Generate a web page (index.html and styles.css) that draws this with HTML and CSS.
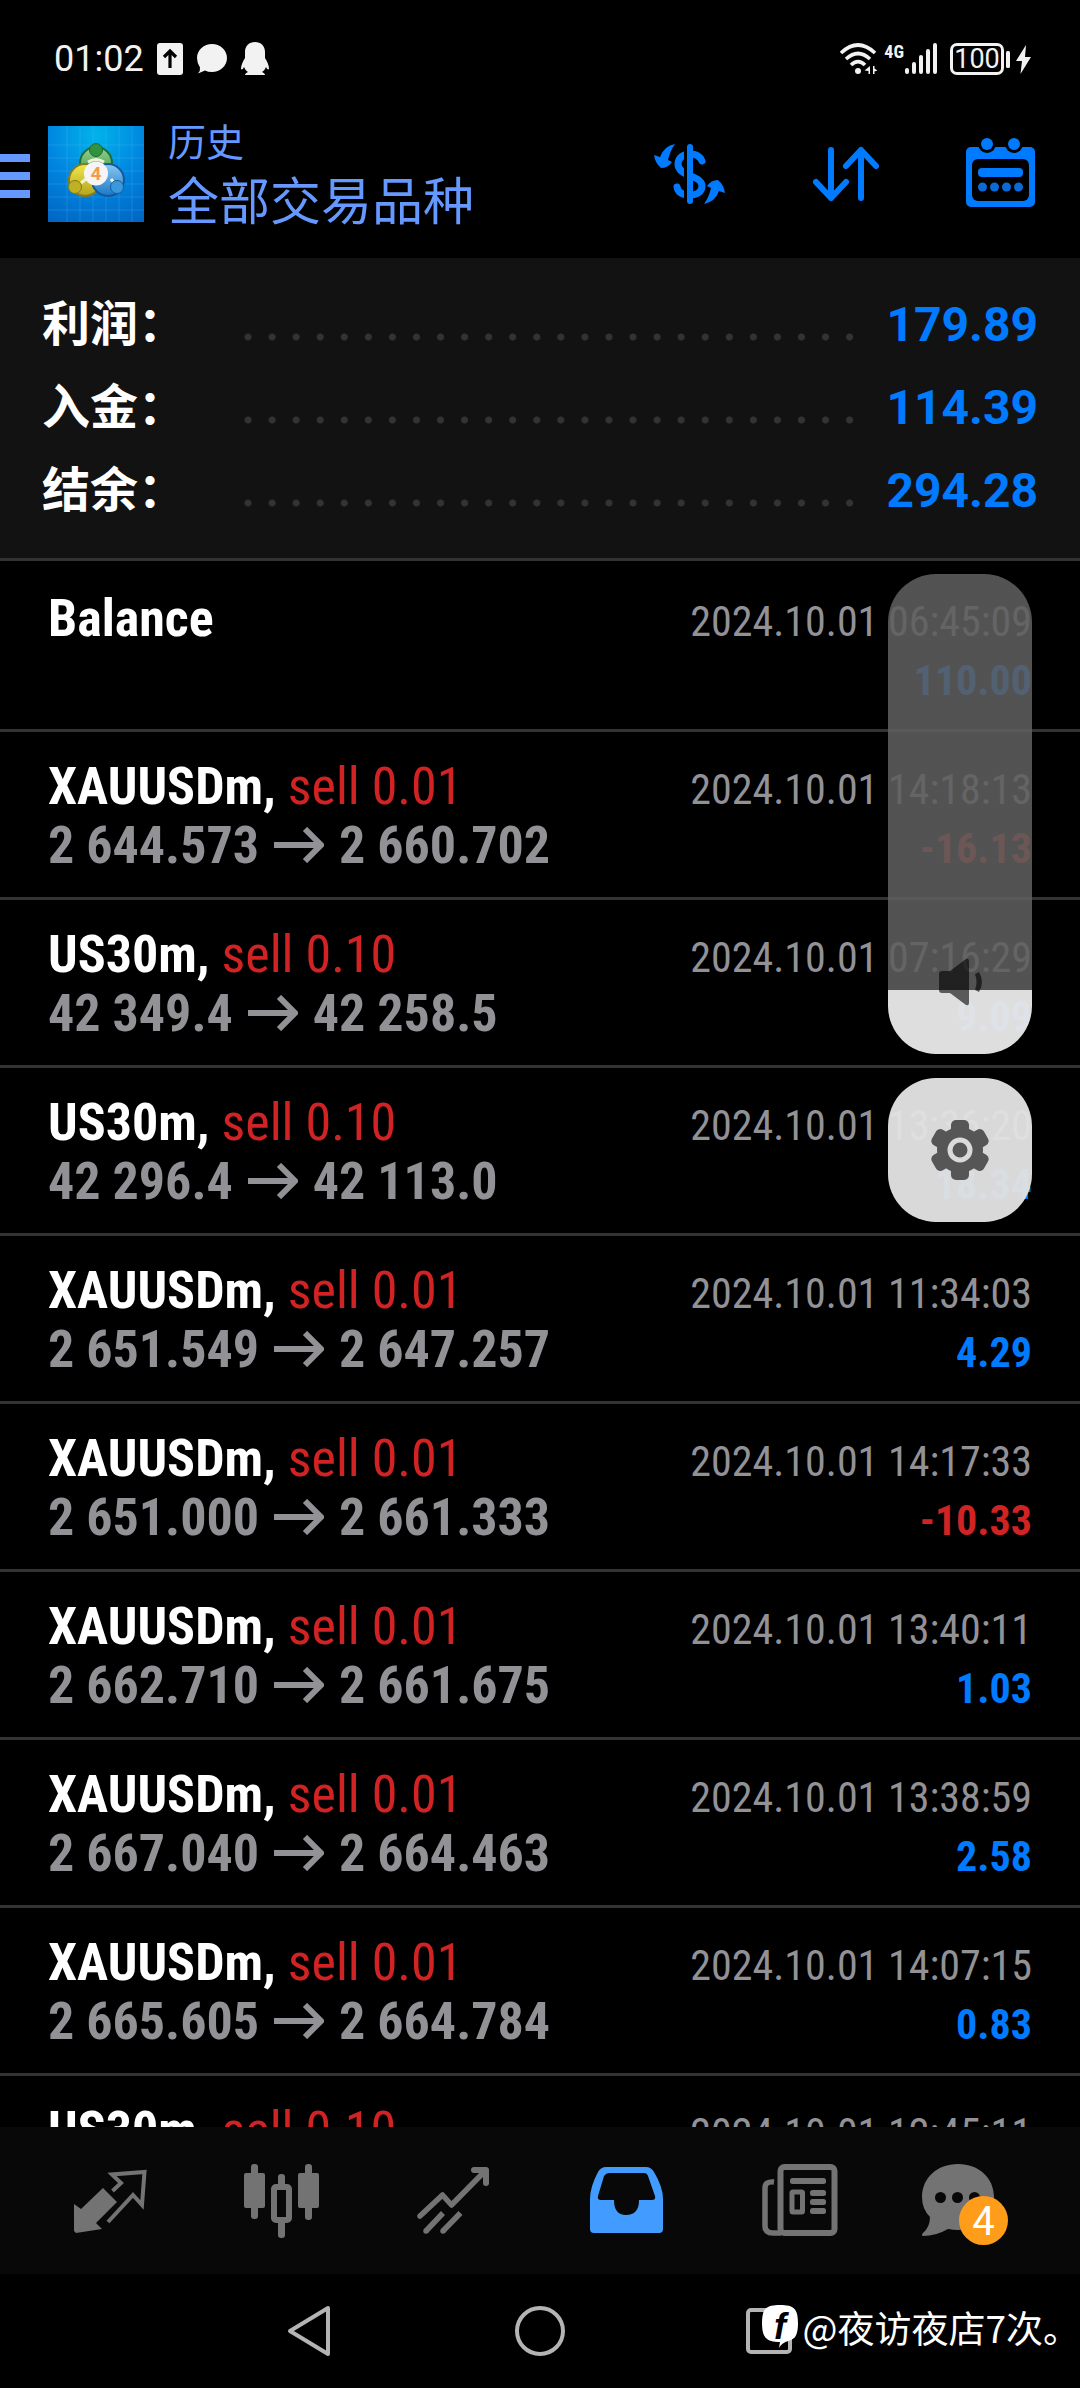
FILE: index.html
```html
<!DOCTYPE html>
<html lang="zh-CN">
<head>
<meta charset="utf-8">
<meta name="viewport" content="width=device-width, initial-scale=1">
<title>历史</title>
<link rel="stylesheet" href="styles.css">
</head>
<body>
<div class="app">
  <div class="status">
    <span class="status-time">01:02</span>
    <svg class="status-icon" width="26" height="32" viewBox="0 0 26 32"><rect width="26" height="32" rx="3" fill="#f2f2f2"/><path d="M13 25V10M7 14l6-6 6 6" fill="none" stroke="#000" stroke-width="3.2"/></svg>
    <svg class="status-icon" width="32" height="32" viewBox="0 0 32 32"><path d="M16 1C24 1 31 7 31 15s-7 14-15 14q-4 0-7-1.500l-7 3q2.500-3 2-6Q1 20 1 15C1 7 8 1 16 1z" fill="#f2f2f2"/></svg>
    <svg class="status-icon" width="28" height="34" viewBox="0 0 28 34"><path d="M14 0c6 0 10 4 10 10v6c2 3 4 7 4 11-1 1-2 0-3-2-1 2-2 4-4 5 2 1 3 2 3 3H4c0-1 1-2 3-3-2-1-3-3-4-5-1 2-2 3-3 2 0-4 2-8 4-11v-6C4 4 8 0 14 0z" fill="#f2f2f2"/></svg>
    <span class="status-gap"></span>
    <svg width="38" height="32" viewBox="0 0 38 32" fill="none" stroke="#f2f2f2" stroke-width="3.600"><path d="M1 10Q18 -6 35 10M6 16Q18 5 30 16M11 22Q18 15 25 22"/><circle cx="18" cy="28" r="3" fill="#f2f2f2" stroke="none"/><path d="M30 23v8h-1.500v-3l-4-.500zM33 31v-8h1.500v2.500l3 2-3 1v2.500z" fill="#f2f2f2" stroke="none"/></svg>
    <span class="status-net">4G</span>
    <svg width="34" height="32" viewBox="0 0 34 32" stroke="#f2f2f2" stroke-width="4" stroke-linecap="round"><path d="M3 27v2M10 21v8M17 14v15M24 8v21M31 2v27"/></svg>
    <span class="battery">100</span>
    <svg width="26" height="32" viewBox="0 0 26 32" fill="#f2f2f2"><rect y="8" width="4" height="17" rx="1.500"/><path d="M20 2L10 18h6l-1.500 13L25 14h-6z"/></svg>
  </div>

  <header class="header">
    <button class="menu" aria-label="菜单"><svg width="30" height="48" viewBox="0 0 30 48" fill="#6699ff"><path d="M0 4h30v8H0zM0 22h30v8H0zM0 40h30v8H0z"/></svg></button>
    <svg class="logo" viewBox="0 0 96 96">
      <defs>
        <radialGradient id="sky" cx=".5" cy=".1" r="1"><stop offset="0" stop-color="#00b4ea"/><stop offset=".5" stop-color="#0086e0"/><stop offset="1" stop-color="#0066c4"/></radialGradient>
        <linearGradient id="green" x2="0" y2="1"><stop offset="0" stop-color="#9bd095"/><stop offset="1" stop-color="#2f9236"/></linearGradient>
        <linearGradient id="yellow" x2="0" y2="1"><stop offset="0" stop-color="#f0e64c"/><stop offset="1" stop-color="#b5a41d"/></linearGradient>
        <linearGradient id="blue" x2="0" y2="1"><stop offset="0" stop-color="#8ac8f0"/><stop offset="1" stop-color="#1b78c8"/></linearGradient>
      </defs>
      <rect width="96" height="96" fill="url(#sky)"/>
      <path d="M19 0v96M32 0v96M45 0v96M58 0v96M71 0v96M84 0v96M0 19h96M0 32h96M0 45h96M0 58h96M0 71h96M0 84h96" stroke="#6cc4f4" stroke-opacity=".22"/>
      <circle cx="48" cy="37" r="16" fill="url(#green)" stroke="#1c7036" stroke-width="2"/>
      <circle cx="37" cy="54" r="16" fill="url(#yellow)" stroke="#837c20" stroke-width="2"/>
      <circle cx="60" cy="54" r="16" fill="url(#blue)" stroke="#125a9c" stroke-width="2"/>
      <path d="M40 36q8-5 16 0M33 57l5-4M63 53l4 5" fill="none" stroke="#e9f3d8" stroke-width="3"/>
      <circle cx="48" cy="24" r="6.500" fill="#2f9340" stroke="#1c6a30"/>
      <circle cx="27" cy="61" r="6.500" fill="#c0b024" stroke="#857a18"/>
      <circle cx="69" cy="61" r="6.500" fill="#3c98dc" stroke="#155c9e"/>
      <circle cx="48" cy="47.500" r="12" fill="#f6f4f4"/>
      <text x="48" y="54" text-anchor="middle" font-family="Roboto, sans-serif" font-size="19" font-weight="700" fill="#f59a4c">4</text>
    </svg>
    <h1 class="titles"><span class="title-small">历史</span><span class="title-big">全部交易品种</span></h1>
    <button class="tool" aria-label="货币"><svg class="icon" viewBox="0 0 96 96"><path d="M60 35C58 30 54 28 48 28C41 28 36 32 36 38C36 44 41 47 48 50C55 52 60 55 60 60C60 66 55 69 48 69C41 69 36 67 35 61" fill="none" stroke="#007aff" stroke-width="7" stroke-linecap="round"/><path d="M43.500 18v60" stroke="#000" stroke-width="3"/><path d="M48 21v54" stroke="#007aff" stroke-width="6" stroke-linecap="round"/><path d="M33 18Q28 25 26 34L30 36Q26 42 19 42Q13 37 12 29L18 31Q22 20 33 18z" fill="#007aff"/><path transform="rotate(180 47.500 48)" d="M33 18Q28 25 26 34L30 36Q26 42 19 42Q13 37 12 29L18 31Q22 20 33 18z" fill="#007aff"/></svg></button>
    <button class="tool" aria-label="排序"><svg class="icon" viewBox="0 0 96 96" fill="none" stroke="#007aff" stroke-width="6" stroke-linecap="round" stroke-linejoin="round"><path d="M33 24v48M18 56l15 16 15-16M63 72V24M48 40l15-16 15 16"/></svg></button>
    <button class="tool" aria-label="日历"><svg class="icon" viewBox="0 0 96 96" fill="#007aff"><rect x="12" y="21" width="69" height="60" rx="5"/><circle cx="33" cy="18" r="9" fill="#000"/><circle cx="60" cy="18" r="9" fill="#000"/><rect x="18" y="33" width="57" height="42" rx="6" fill="#000"/><circle cx="33" cy="18" r="6"/><circle cx="60" cy="18" r="6"/><rect x="24" y="42" width="45" height="9" rx="4"/><g fill="#0a6ad8"><circle cx="28.500" cy="61" r="4.500"/><circle cx="40.500" cy="61" r="4.500"/><circle cx="52.500" cy="61" r="4.500"/><circle cx="64.500" cy="61" r="4.500"/></g></svg></button>
  </header>

  <dl class="summary">
    <div class="sum-row"><dt>利润：</dt><dd>179.89</dd></div>
    <div class="sum-row"><dt>入金：</dt><dd>114.39</dd></div>
    <div class="sum-row"><dt>结余：</dt><dd>294.28</dd></div>
  </dl>

  <svg class="defs" aria-hidden="true"><symbol id="arrow" viewBox="0 0 50 36"><path d="M0 18h46M31 2l16 16-16 16" fill="none" stroke="#929296" stroke-width="6"/></symbol></svg>

  <ul class="deals">
    <li class="deal"><div class="line"><b class="symbol">Balance</b><time>2024.10.01 06:45:09</time></div><div class="line"><b class="profit">110.00</b></div></li>
    <li class="deal"><div class="line"><b class="symbol">XAUUSDm,</b><span class="side">sell 0.01</span><time>2024.10.01 14:18:13</time></div><div class="line"><b class="price">2 644.573</b><svg class="to"><use href="#arrow"/></svg><b class="price">2 660.702</b><b class="profit loss">-16.13</b></div></li>
    <li class="deal"><div class="line"><b class="symbol">US30m,</b><span class="side">sell 0.10</span><time>2024.10.01 07:16:29</time></div><div class="line"><b class="price">42 349.4</b><svg class="to"><use href="#arrow"/></svg><b class="price">42 258.5</b><b class="profit">9.09</b></div></li>
    <li class="deal"><div class="line"><b class="symbol">US30m,</b><span class="side">sell 0.10</span><time>2024.10.01 13:36:20</time></div><div class="line"><b class="price">42 296.4</b><svg class="to"><use href="#arrow"/></svg><b class="price">42 113.0</b><b class="profit">18.34</b></div></li>
    <li class="deal"><div class="line"><b class="symbol">XAUUSDm,</b><span class="side">sell 0.01</span><time>2024.10.01 11:34:03</time></div><div class="line"><b class="price">2 651.549</b><svg class="to"><use href="#arrow"/></svg><b class="price">2 647.257</b><b class="profit">4.29</b></div></li>
    <li class="deal"><div class="line"><b class="symbol">XAUUSDm,</b><span class="side">sell 0.01</span><time>2024.10.01 14:17:33</time></div><div class="line"><b class="price">2 651.000</b><svg class="to"><use href="#arrow"/></svg><b class="price">2 661.333</b><b class="profit loss">-10.33</b></div></li>
    <li class="deal"><div class="line"><b class="symbol">XAUUSDm,</b><span class="side">sell 0.01</span><time>2024.10.01 13:40:11</time></div><div class="line"><b class="price">2 662.710</b><svg class="to"><use href="#arrow"/></svg><b class="price">2 661.675</b><b class="profit">1.03</b></div></li>
    <li class="deal"><div class="line"><b class="symbol">XAUUSDm,</b><span class="side">sell 0.01</span><time>2024.10.01 13:38:59</time></div><div class="line"><b class="price">2 667.040</b><svg class="to"><use href="#arrow"/></svg><b class="price">2 664.463</b><b class="profit">2.58</b></div></li>
    <li class="deal"><div class="line"><b class="symbol">XAUUSDm,</b><span class="side">sell 0.01</span><time>2024.10.01 14:07:15</time></div><div class="line"><b class="price">2 665.605</b><svg class="to"><use href="#arrow"/></svg><b class="price">2 664.784</b><b class="profit">0.83</b></div></li>
    <li class="deal"><div class="line"><b class="symbol">US30m,</b><span class="side">sell 0.10</span><time>2024.10.01 12:45:11</time></div></li>
  </ul>

  <nav class="tabs">
    <button class="tab" aria-label="行情"><svg class="icon" viewBox="0 0 96 96"><path d="M12 51l7 5 22-21 14 14-21 21 6 6-26 4-2-2z" fill="#737373"/><path d="M50.500 38l8.500-8-9-8.500 32.500-2.500-2.500 33-9-10-25 27" fill="none" stroke="#737373" stroke-width="4"/></svg></button>
    <button class="tab" aria-label="图表"><svg class="icon" viewBox="0 0 96 96" fill="#737373"><rect x="10" y="20" width="21" height="35" rx="2"/><rect x="17" y="11" width="7" height="55" rx="3"/><rect x="64" y="20" width="21" height="35" rx="2"/><rect x="71" y="11" width="7" height="56" rx="3"/><rect x="44" y="21" width="7" height="14" rx="3"/><rect x="44" y="66" width="7" height="19" rx="3"/><rect x="40" y="34" width="15" height="33" rx="2" fill="none" stroke="#737373" stroke-width="6"/></svg></button>
    <button class="tab" aria-label="交易"><svg class="icon" viewBox="0 0 96 96" fill="none" stroke="#737373" stroke-width="5.500" stroke-linejoin="round"><path d="M14 63l22.500-21 9 10L79 18" stroke-linecap="round"/><path d="M68 17h12v13" stroke-width="6" stroke-linecap="round"/><path d="M20 78l17-18M37 78l17.500-18"/><path d="M20 78h.010M37 78h.010" stroke-linecap="round"/></svg></button>
    <button class="tab" aria-label="历史" aria-current="page"><svg class="icon" viewBox="0 0 96 96"><path fill-rule="evenodd" d="M28 14H68Q73 14 76 19Q85 34 85 46V76Q85 80 81 80H16Q12 80 12 76V46Q12 34 20 19Q23 14 28 14zM31 20Q28 20 26 23L20 43Q19 47 23 47H36Q36 62 48 62Q61 62 61 47H74Q78 47 77 43L70 23Q69 20 66 20z" fill="#429cff"/></svg></button>
    <button class="tab" aria-label="新闻"><svg class="icon" viewBox="0 0 96 96" fill="#737373"><rect x="30.500" y="14" width="54" height="66" rx="4" fill="none" stroke="#737373" stroke-width="6"/><path d="M24 29Q15 28 15 35V73Q15 80 23 80H31" fill="none" stroke="#737373" stroke-width="5.500"/><rect x="40" y="25" width="36" height="6" rx="2.500"/><rect x="42" y="39" width="10.500" height="20" rx="1" fill="none" stroke="#737373" stroke-width="5"/><rect x="60" y="37" width="16" height="6" rx="2.500"/><rect x="60" y="46" width="16" height="6" rx="2.500"/><rect x="60" y="55" width="16" height="6" rx="2.500"/></svg></button>
    <button class="tab" aria-label="消息"><svg class="icon" viewBox="0 0 96 96"><path d="M36 11C57 11 72 25 72 44S57 77 36 77Q32 77 26 76Q14 83 1 83Q-1 82 1 80Q8 74 8 64Q0 56 0 44C0 25 15 11 36 11z" fill="#737373"/><g fill="#080808"><circle cx="18.500" cy="44.500" r="5.500"/><circle cx="35.500" cy="44.500" r="5.500"/><circle cx="52.500" cy="44.500" r="5.500"/></g></svg><span class="badge">4</span></button>
  </nav>

  <div class="system">
    <button aria-label="返回"><svg width="50" height="54" viewBox="0 0 50 54" fill="none" stroke="#b4b4b4" stroke-width="4" stroke-linejoin="round"><path d="M43 4v46L5 27z"/></svg></button>
    <button aria-label="主页"><svg width="54" height="54" viewBox="0 0 54 54" fill="none" stroke="#b4b4b4" stroke-width="4"><circle cx="27" cy="27" r="23"/></svg></button>
    <button aria-label="最近任务"><svg width="54" height="54" viewBox="0 0 54 54" fill="none" stroke="#b4b4b4" stroke-width="4"><rect x="5" y="6" width="42" height="42" rx="3"/></svg></button>
  </div>
  <div class="watermark"><svg width="36" height="44" viewBox="0 0 36 44"><path d="M18 0C32 0 36 4 36 18c0 10-2 15-7 17-6 2-9 3-12 8l1-6C4 37 0 32 0 18 0 4 4 0 18 0z" fill="#fff"/><text x="18" y="34" text-anchor="middle" font-family="Liberation Sans, sans-serif" font-style="italic" font-weight="700" font-size="36">f</text></svg><span>@夜访夜店7次。</span></div>

  <div class="volume">
    <label class="slider"><input type="range" min="0" max="100" value="13" aria-label="音量"><svg width="48" height="48" viewBox="0 0 48 48" fill="#000" fill-opacity=".6"><path d="M6 13h8L30 1q3-1 3 2v42q0 3-3 2L14 35H6q-3 0-3-3V16q0-3 3-3z"/><path d="M39 16l4-2q6 10 0 20l-4-2q3-8 0-16z"/></svg></label>
    <button class="settings" aria-label="设置"><svg width="60" height="60" viewBox="-30 -30 60 60" fill="#565656"><circle r="23"/><g><rect x="-9" y="-30" width="18" height="60" rx="5"/><rect x="-9" y="-30" width="18" height="60" rx="5" transform="rotate(60)"/><rect x="-9" y="-30" width="18" height="60" rx="5" transform="rotate(120)"/></g><circle r="10" fill="none" stroke="#dadada" stroke-width="5"/></svg></button>
  </div>
</div>
</body>
</html>
```
FILE: styles.css
```css
* {
  box-sizing: border-box;
}

body {
  margin: 0;
  background: #000;
  color: #fff;
  font-family: Roboto, "Noto Sans CJK SC", sans-serif;
}

button {
  display: flex;
  align-items: center;
  justify-content: center;
  padding: 0;
  border: 0;
  background: none;
}

.app {
  position: relative;
  display: flex;
  flex-direction: column;
  height: 100vh;
  overflow: hidden;
}

.icon {
  width: 96px;
  height: 96px;
}

.defs {
  position: absolute;
  width: 0;
  height: 0;
}

/* Status bar */
.status {
  display: flex;
  align-items: center;
  height: 80px;
  padding: 38px 48px 0 54px;
  color: #f2f2f2;
}

.status-time {
  font-size: 36px;
  line-height: 42px;
}

.status-icon {
  margin-left: 13px;
}

.status-gap {
  flex: 1;
}

.status-net {
  align-self: flex-start;
  margin: 5px 0 0 6px;
  font-family: "Roboto Condensed", "Liberation Sans Narrow", Roboto, sans-serif;
  font-size: 18px;
  line-height: 18px;
  font-weight: 700;
}

.battery {
  width: 54px;
  height: 32px;
  margin: 0 2px 0 12px;
  border: 3px solid #f2f2f2;
  border-radius: 7px;
  font-size: 27px;
  line-height: 27px;
  text-align: center;
}

/* App header */
.header {
  display: flex;
  align-items: center;
  height: 178px;
  padding-top: 10px;
}

.logo {
  width: 96px;
  height: 96px;
  margin: 0 24px 0 18px;
}

.titles {
  display: flex;
  flex: 1;
  flex-direction: column;
  margin: 0;
  padding-top: 5px;
  color: #6699ff;
  font-weight: 400;
  white-space: nowrap;
}

.title-small {
  font-size: 38px;
  line-height: 52px;
}

.title-big {
  font-size: 51px;
  line-height: 68px;
}

.tool {
  width: 156px;
  height: 156px;
}

/* Totals */
.summary {
  margin: 0;
  padding: 25px 42px 26px;
  border-bottom: 3px solid #333;
  background: #121212;
}

.sum-row {
  display: flex;
  align-items: center;
  height: 83px;
  font-size: 48px;
  line-height: 56px;
}

.sum-row dt {
  width: 194px;
  font-weight: 700;
}

.sum-row::after {
  content: "";
  order: 1;
  flex: 1;
  height: 8px;
  margin: 24px 24px 0 0;
  background: radial-gradient(circle, #333 3px, transparent 4px) 0 0 / 24px 8px round;
}

.sum-row dd {
  order: 2;
  margin: 0;
  color: #007aff;
  font-weight: 700;
}

/* Deals */
.deals {
  flex: 1;
  min-height: 0;
  margin: 0;
  padding: 0;
  overflow-y: auto;
  scrollbar-width: none;
  list-style: none;
  font-family: "Roboto Condensed", "Liberation Sans Narrow", Roboto, sans-serif;
}

.deal {
  height: 168px;
  padding: 25px 48px 0;
  border-top: 3px solid #333;
}

.deal:first-child {
  border-top-color: transparent;
}

.line {
  display: flex;
  align-items: baseline;
  height: 59px;
  font-size: 52px;
  line-height: 59px;
  white-space: nowrap;
}

/* Keeps the baseline of a line that holds only small text */
.line::before {
  content: "\200b";
}

.side {
  margin-left: 12px;
  color: #d12323;
}

.price {
  color: #929296;
}

.to {
  width: 50px;
  height: 36px;
  margin: 0 15px;
}

.deals time,
.profit {
  margin-left: auto;
  font-size: 42px;
}

.deals time {
  color: #929296;
}

.profit {
  color: #007aff;
}

.loss {
  color: #d12323;
}

/* Bottom tabs */
.tabs {
  display: flex;
  height: 147px;
  padding: 0 24px;
  background: #080808;
}

.tab {
  position: relative;
  flex: 1;
}

.tab .icon {
  overflow: visible;
}

.badge {
  position: absolute;
  top: 69px;
  left: calc(50% - 11px);
  width: 49px;
  height: 49px;
  border-radius: 50%;
  background: #ff9c1a;
  color: #fff;
  font-family: Roboto, sans-serif;
  font-size: 40px;
  line-height: 51px;
  text-align: center;
}

.system {
  display: flex;
  justify-content: center;
  height: 114px;
}

.system button {
  width: 230px;
}

.watermark {
  position: absolute;
  right: 0;
  bottom: 36px;
  display: flex;
  align-items: center;
  gap: 4px;
  font-family: "Noto Sans CJK SC", sans-serif;
  font-size: 37px;
  line-height: 50px;
}

/* Volume panel */
.volume {
  position: absolute;
  top: 574px;
  right: 48px;
  display: flex;
  flex-direction: column;
  gap: 24px;
  width: 144px;
}

.slider {
  display: grid;
  justify-items: center;
  align-items: end;
  height: 480px;
}

.slider > * {
  grid-area: 1 / 1;
}

.slider svg {
  margin-bottom: 48px;
}

.slider input {
  appearance: none;
  writing-mode: vertical-lr;
  direction: rtl;
  width: 144px;
  height: 480px;
  margin: 0;
  border-radius: 48px;
  background: linear-gradient(to top, rgba(231, 231, 231, 0.96) 64px, rgba(94, 94, 94, 0.88) 64px);
}

.slider input::-webkit-slider-thumb {
  appearance: none;
  width: 0;
  height: 0;
}

.settings {
  height: 144px;
  border-radius: 48px;
  background: rgba(226, 226, 226, 0.96);
}
```
